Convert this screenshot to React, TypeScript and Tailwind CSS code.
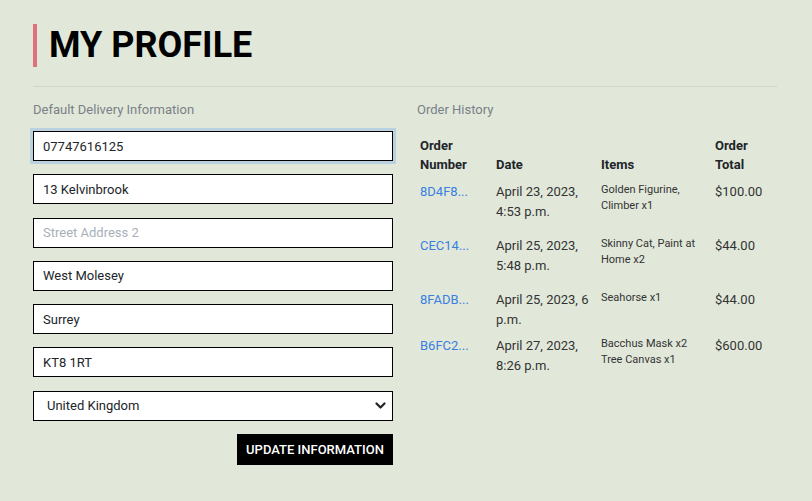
import React from "react";

const orders = [
  { id: "8D4F8...", date: ["April 23, 2023,", "4:53 p.m."], items: ["Golden Figurine, Climber x1"], total: "$100.00" },
  { id: "CEC14...", date: ["April 25, 2023,", "5:48 p.m."], items: ["Skinny Cat, Paint at Home x2"], total: "$44.00" },
  { id: "8FADB...", date: ["April 25, 2023, 6", "p.m."], items: ["Seahorse x1"], total: "$44.00" },
  { id: "B6FC2...", date: ["April 27, 2023,", "8:26 p.m."], items: ["Bacchus Mask x2", "Tree Canvas x1"], total: "$600.00" },
];

function Field({ value, placeholder, focused }: { value?: string; placeholder?: string; focused?: boolean }) {
  return (
    <input
      readOnly
      defaultValue={value}
      placeholder={placeholder}
      className={
        "h-[30px] w-full border border-black bg-white px-[9px] text-[13px] text-[#212529] outline-none placeholder:text-[#a9b0b7] " +
        (focused ? "shadow-[0_0_0_3px_rgba(170,200,225,0.7)]" : "")
      }
    />
  );
}

export default function App() {
  return (
    <div className="min-h-[501px] w-full bg-[#e1e8da] font-['Roboto',sans-serif] text-[#212529]">
      <div className="w-[744px] ml-[33px] pt-[24px]">
        <h1 className="border-l-4 border-[#e0707a] pl-[12px] text-[36px] font-bold leading-[43px] text-black">
          MY PROFILE
        </h1>
        <div className="mt-[19px] h-px bg-[#cfd7c8]" />
        <div className="mt-[13px] grid grid-cols-2 gap-6">
          <div>
            <div className="text-[13px] leading-[20px] text-[#7a8087]">Default Delivery Information</div>
            <div className="mt-[11px] flex flex-col gap-[13.3px]">
              <Field value="07747616125" focused />
              <Field value="13 Kelvinbrook" />
              <Field placeholder="Street Address 2" />
              <Field value="West Molesey" />
              <Field value="Surrey" />
              <Field value="KT8 1RT" />
              <div className="relative">
                <select className="h-[30px] w-full appearance-none border border-black bg-white px-[13px] text-[13px] text-[#212529] outline-none">
                  <option>United Kingdom</option>
                </select>
                <svg
                  className="pointer-events-none absolute right-[7px] top-[11px]"
                  width="11"
                  height="8"
                  viewBox="0 0 11 8"
                >
                  <path d="M1.5 1.5 L5.5 5.5 L9.5 1.5" fill="none" stroke="#222" strokeWidth="2.2" strokeLinecap="round" strokeLinejoin="round" />
                </svg>
              </div>
              <div className="flex justify-end">
                <button className="h-[31px] w-[156px] bg-black text-[13px] font-medium text-white">
                  UPDATE INFORMATION
                </button>
              </div>
            </div>
          </div>
          <div>
            <div className="text-[13px] leading-[20px] text-[#7a8087]">Order History</div>
            <table className="mt-[13px] w-[360px] table-fixed border-collapse text-left">
              <colgroup>
                <col className="w-[76px]" />
                <col className="w-[105px]" />
                <col className="w-[114px]" />
                <col className="w-[65px]" />
              </colgroup>
              <thead>
                <tr className="align-bottom text-[13px] font-bold leading-[19px] text-[#212529]">
                  <th className="pl-[3px] pr-0 pt-[3px] pb-[5px] font-bold">Order Number</th>
                  <th className="pl-[3px] pr-0 pt-[3px] pb-[5px] font-bold">Date</th>
                  <th className="pl-[3px] pr-0 pt-[3px] pb-[5px] font-bold">Items</th>
                  <th className="pl-[3px] pr-0 pt-[3px] pb-[5px] font-bold">Order Total</th>
                </tr>
              </thead>
              <tbody>
                {orders.map((o) => (
                  <tr key={o.id} className="align-top">
                    <td className="pl-[3px] pr-0 pt-[3px] pb-[3px] text-[13px] leading-[20px]">
                      <a className="text-[#3a7fe0]" href="#">{o.id}</a>
                    </td>
                    <td className="pl-[3px] pr-0 pt-[3px] pb-[3px] text-[13px] leading-[20px] text-[#333]">
                      {o.date[0]}
                      <br />
                      {o.date[1]}
                    </td>
                    <td className="pl-[3px] pr-0 pt-[3px] pb-[3px] text-[11px] leading-[16px] text-[#333]">
                      <div className="mb-[16px]">
                        {o.items.map((it) => (
                          <div key={it}>{it}</div>
                        ))}
                      </div>
                    </td>
                    <td className="pl-[3px] pr-0 pt-[3px] pb-[3px] text-[13px] leading-[20px] text-[#333]">
                      {o.total}
                    </td>
                  </tr>
                ))}
              </tbody>
            </table>
          </div>
        </div>
      </div>
    </div>
  );
}
